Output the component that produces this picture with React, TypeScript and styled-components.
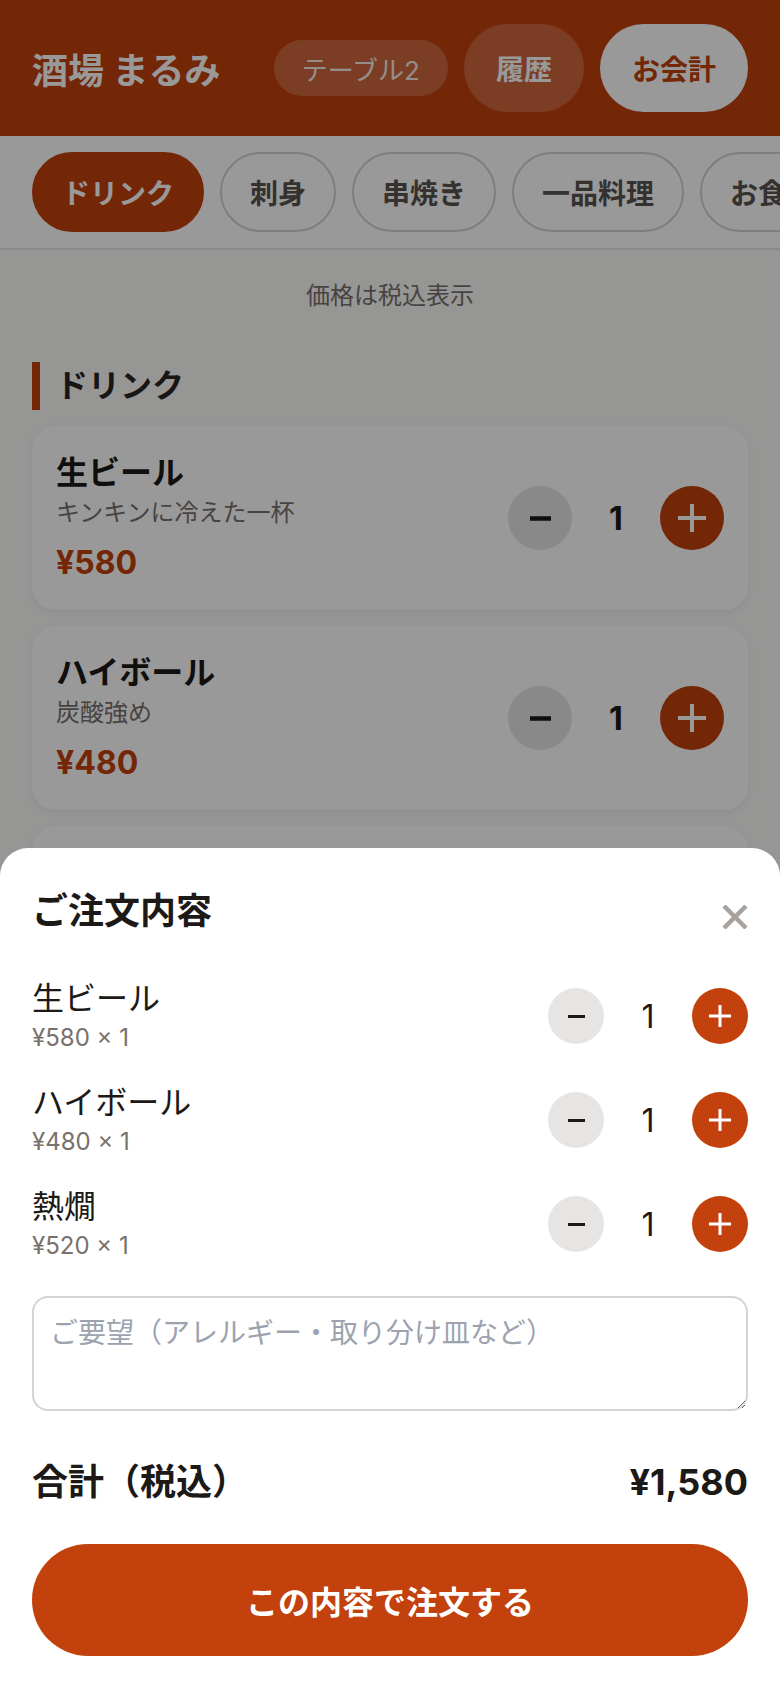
import React from 'react';
import styled, { createGlobalStyle, css } from 'styled-components';

const ACCENT = '#c2410c';
const INK = '#1c1917';
const MUTED = '#78716c';

const GlobalStyle = createGlobalStyle`
  * { box-sizing: border-box; }
  body {
    margin: 0;
    background: #fafaf9;
    font-family: Inter, "Noto Sans CJK JP", sans-serif;
    color: ${INK};
  }
`;

interface MenuItem {
  name: string;
  note: string;
  price: number;
}

const drinks: MenuItem[] = [
  { name: '生ビール', note: 'キンキンに冷えた一杯', price: 580 },
  { name: 'ハイボール', note: '炭酸強め', price: 480 },
  { name: '熱燗', note: '一合', price: 520 },
  { name: 'レモンサワー', note: '自家製レモン', price: 450 },
];

const cart = [
  { name: '生ビール', price: 580, qty: 1 },
  { name: 'ハイボール', price: 480, qty: 1 },
  { name: '熱燗', price: 520, qty: 1 },
];

const categories = ['ドリンク', '刺身', '串焼き', '一品料理', 'お食事', 'デザート'];

const yen = (n: number) => '¥' + n.toLocaleString('en-US');

// ---- header ----

const Header = styled.header`
  height: 136px;
  padding: 0 32px;
  background: ${ACCENT};
  display: flex;
  align-items: center;
  justify-content: space-between;
`;

const Title = styled.h1`
  margin: 0;
  color: #fff;
  font-size: 36px;
  font-weight: 700;
`;

const HeaderActions = styled.div`
  display: flex;
  align-items: center;
  gap: 16px;
`;

const TablePill = styled.span`
  height: 56px;
  padding: 0 28px;
  border-radius: 999px;
  background: rgba(255, 255, 255, 0.2);
  color: rgba(255, 255, 255, 0.9);
  font-size: 26px;
  display: flex;
  align-items: center;
`;

const HeaderButton = styled.button<{ $solid?: boolean }>`
  height: 88px;
  padding: 0 32px;
  border: none;
  border-radius: 999px;
  font-family: inherit;
  font-size: 28px;
  font-weight: 700;
  background: ${p => (p.$solid ? '#fff' : 'rgba(255, 255, 255, 0.2)')};
  color: ${p => (p.$solid ? ACCENT : '#fff')};
`;

// ---- categories ----

const CategoryBar = styled.nav`
  display: flex;
  gap: 16px;
  padding: 16px 32px;
  background: #fff;
  border-bottom: 2px solid #e7e5e4;
  overflow: hidden;
`;

const CategoryTab = styled.button<{ $active?: boolean }>`
  flex-shrink: 0;
  height: 80px;
  padding: 0 28px;
  border-radius: 999px;
  font-family: inherit;
  font-size: 28px;
  font-weight: 700;
  border: 2px solid ${p => (p.$active ? ACCENT : '#d6d3d1')};
  background: ${p => (p.$active ? ACCENT : '#fff')};
  color: ${p => (p.$active ? '#fff' : '#57534e')};
`;

// ---- menu ----

const Main = styled.main`
  padding: 28px 32px 40px;
`;

const Notice = styled.p`
  margin: 0 0 48px;
  text-align: center;
  font-size: 24px;
  line-height: 36px;
  color: ${MUTED};
`;

const SectionTitle = styled.h2`
  margin: 0 0 16px;
  padding-left: 16px;
  border-left: 8px solid ${ACCENT};
  font-size: 32px;
  line-height: 48px;
  font-weight: 700;
  color: #292524;
`;

const CardList = styled.div`
  display: flex;
  flex-direction: column;
  gap: 16px;
`;

const MenuCard = styled.div`
  display: flex;
  align-items: center;
  justify-content: space-between;
  padding: 24px;
  background: #fff;
  border-radius: 24px;
  box-shadow: 0 2px 8px rgba(0, 0, 0, 0.06);
`;

const ItemName = styled.div`
  font-size: 32px;
  line-height: 46px;
  font-weight: 700;
`;

const ItemNote = styled.div`
  font-size: 24px;
  line-height: 34px;
  color: ${MUTED};
`;

const ItemPrice = styled.div`
  margin-top: 10px;
  font-size: 32px;
  line-height: 46px;
  font-weight: 700;
  color: ${ACCENT};
`;

// ---- stepper ----

const StepperRow = styled.div`
  display: flex;
  align-items: center;
  gap: 16px;
`;

const RoundButton = styled.button<{ $size: number; $plus?: boolean }>`
  width: ${p => p.$size}px;
  height: ${p => p.$size}px;
  padding: 0;
  border: none;
  border-radius: 50%;
  display: flex;
  align-items: center;
  justify-content: center;
  background: ${p => (p.$plus ? ACCENT : '#e7e5e4')};
  color: ${p => (p.$plus ? '#fff' : INK)};
`;

const Count = styled.span<{ $bold?: boolean }>`
  width: 56px;
  text-align: center;
  font-size: 32px;
  color: ${INK};
  ${p =>
    p.$bold &&
    css`
      font-weight: 700;
    `}
`;

const MinusIcon = ({ w, t }: { w: number; t: number }) => (
  <svg width={w} height={w} viewBox={`0 0 ${w} ${w}`}>
    <line x1={0} y1={w / 2} x2={w} y2={w / 2} stroke="currentColor" strokeWidth={t} />
  </svg>
);

const PlusIcon = ({ w, t }: { w: number; t: number }) => (
  <svg width={w} height={w} viewBox={`0 0 ${w} ${w}`}>
    <line x1={0} y1={w / 2} x2={w} y2={w / 2} stroke="currentColor" strokeWidth={t} />
    <line x1={w / 2} y1={0} x2={w / 2} y2={w} stroke="currentColor" strokeWidth={t} />
  </svg>
);

const Stepper = ({ qty, large }: { qty: number; large?: boolean }) => (
  <StepperRow>
    <RoundButton $size={large ? 64 : 56}>
      <MinusIcon w={large ? 21 : 17} t={large ? 4.5 : 3} />
    </RoundButton>
    <Count $bold={large}>{qty}</Count>
    <RoundButton $size={large ? 64 : 56} $plus>
      <PlusIcon w={large ? 28 : 22} t={large ? 4 : 3} />
    </RoundButton>
  </StepperRow>
);

// ---- order sheet ----

const Overlay = styled.div`
  position: fixed;
  inset: 0;
  background: rgba(0, 0, 0, 0.4);
`;

const Sheet = styled.section`
  position: fixed;
  left: 0;
  right: 0;
  bottom: 0;
  padding: 38px 32px 32px;
  background: #fff;
  border-radius: 28px 28px 0 0;
`;

const SheetHeader = styled.div`
  display: flex;
  align-items: center;
  justify-content: space-between;
  margin-bottom: 28px;
`;

const SheetTitle = styled.h2`
  margin: 0;
  font-size: 36px;
  line-height: 50px;
  font-weight: 700;
`;

const CloseButton = styled.button`
  margin-top: 12px;
  padding: 0;
  border: none;
  background: none;
  color: #a8a29e;
  display: flex;
`;

const CartRow = styled.div`
  display: flex;
  align-items: center;
  justify-content: space-between;
  padding: 13px 0;
`;

const CartName = styled.div`
  font-size: 32px;
  line-height: 44px;
`;

const CartPrice = styled.div`
  font-size: 24px;
  line-height: 34px;
  color: ${MUTED};
`;

const Notes = styled.textarea`
  display: block;
  width: 100%;
  height: 115px;
  margin-top: 20px;
  padding: 16px;
  border: 2px solid #d6d3d1;
  border-radius: 16px;
  font-family: inherit;
  font-size: 28px;
  line-height: 1.4;
  color: ${INK};
  resize: vertical;
  &::placeholder {
    color: #9ca3af;
  }
`;

const TotalRow = styled.div`
  display: flex;
  align-items: center;
  justify-content: space-between;
  margin: 46px 0 37px;
  font-size: 36px;
  line-height: 50px;
  font-weight: 700;
`;

const OrderButton = styled.button`
  width: 100%;
  height: 112px;
  border: none;
  border-radius: 999px;
  background: ${ACCENT};
  color: #fff;
  font-family: inherit;
  font-size: 32px;
  font-weight: 700;
`;

const App: React.FC = () => {
  const total = cart.reduce((sum, c) => sum + c.price * c.qty, 0);

  return (
    <>
      <GlobalStyle />
      <Header>
        <Title>酒場 まるみ</Title>
        <HeaderActions>
          <TablePill>テーブル2</TablePill>
          <HeaderButton>履歴</HeaderButton>
          <HeaderButton $solid>お会計</HeaderButton>
        </HeaderActions>
      </Header>

      <CategoryBar>
        {categories.map((c, i) => (
          <CategoryTab key={c} $active={i === 0}>
            {c}
          </CategoryTab>
        ))}
      </CategoryBar>

      <Main>
        <Notice>価格は税込表示</Notice>
        <SectionTitle>ドリンク</SectionTitle>
        <CardList>
          {drinks.map(d => (
            <MenuCard key={d.name}>
              <div>
                <ItemName>{d.name}</ItemName>
                <ItemNote>{d.note}</ItemNote>
                <ItemPrice>{yen(d.price)}</ItemPrice>
              </div>
              <Stepper qty={1} large />
            </MenuCard>
          ))}
        </CardList>
      </Main>

      <Overlay />
      <Sheet>
        <SheetHeader>
          <SheetTitle>ご注文内容</SheetTitle>
          <CloseButton aria-label="閉じる">
            <svg width="26" height="24" viewBox="0 0 26 24">
              <path d="M2 1 L24 23 M24 1 L2 23" stroke="currentColor" strokeWidth="4.5" />
            </svg>
          </CloseButton>
        </SheetHeader>

        {cart.map(c => (
          <CartRow key={c.name}>
            <div>
              <CartName>{c.name}</CartName>
              <CartPrice>
                {yen(c.price)} × {c.qty}
              </CartPrice>
            </div>
            <Stepper qty={c.qty} />
          </CartRow>
        ))}

        <Notes rows={2} placeholder="ご要望（アレルギー・取り分け皿など）" />

        <TotalRow>
          <span>合計（税込）</span>
          <span>{yen(total)}</span>
        </TotalRow>

        <OrderButton>この内容で注文する</OrderButton>
      </Sheet>
    </>
  );
};

export default App;
